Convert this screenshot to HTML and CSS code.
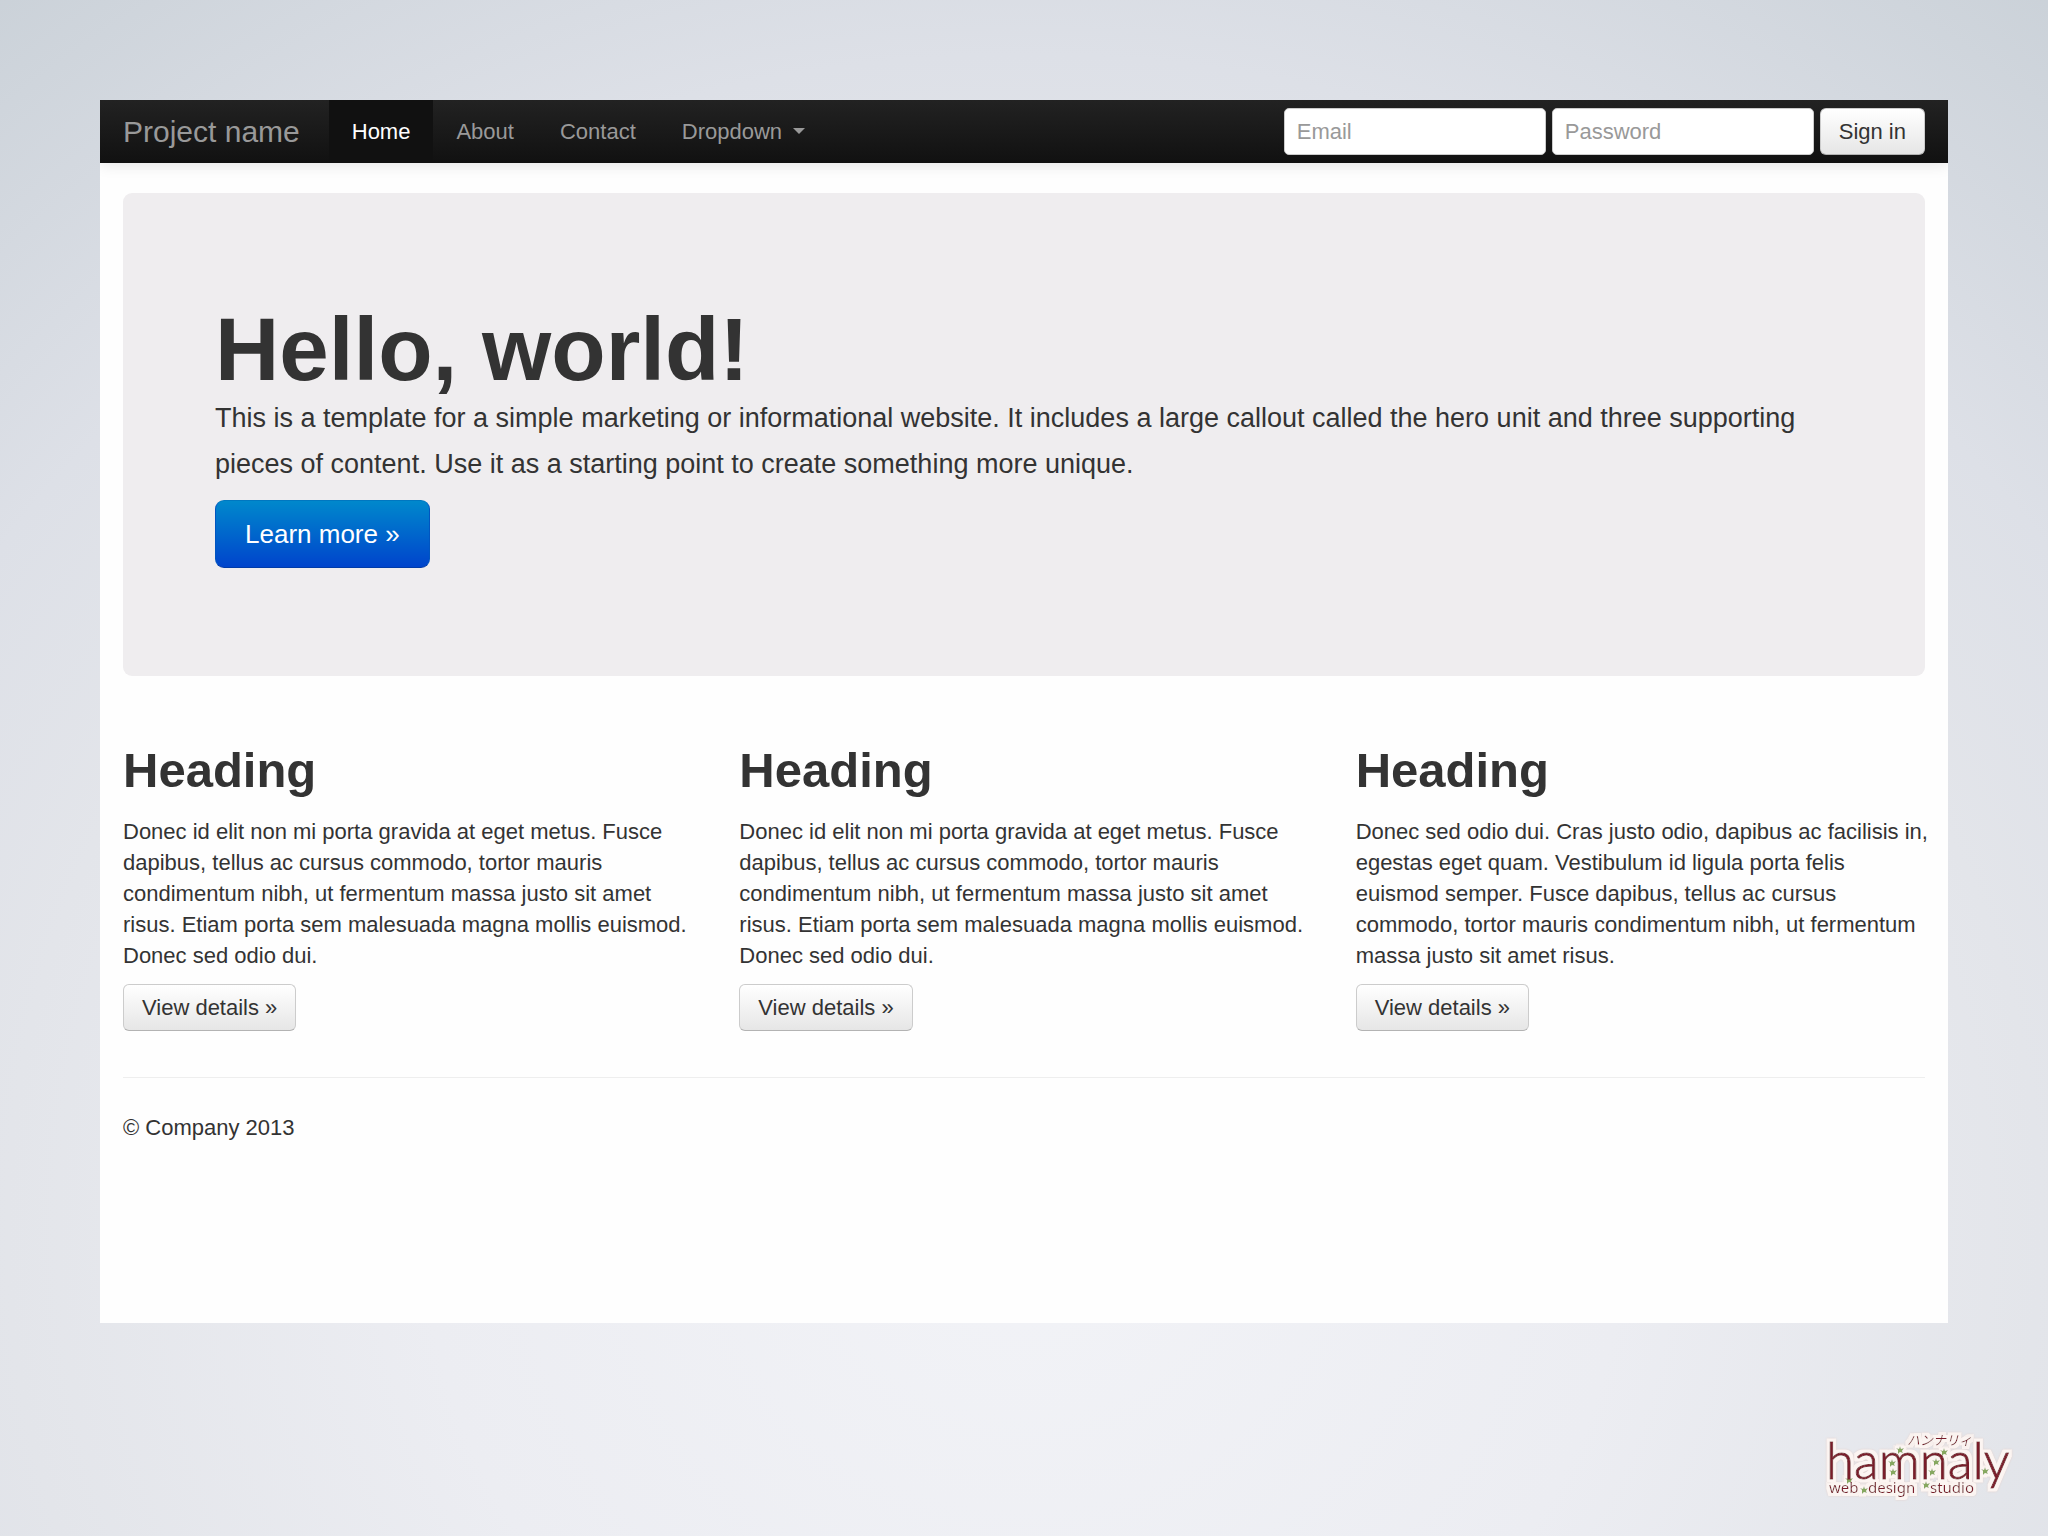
FILE: index.html
```
<!DOCTYPE html>
<html lang="en">
    <head>
        <meta charset="UTF-8" />
        <meta name="viewport" content="width=device-width, initial-scale=1.0" />
        <title>Project name</title>
        <link rel="stylesheet" href="styles.css">
    </head>
    <body>
        <div class="page">
            <header class="navbar">
                <a class="brand" href="#">Project name</a>
                <nav class="nav">
                    <a class="nav-link active" href="#">Home</a>
                    <a class="nav-link" href="#about">About</a>
                    <a class="nav-link" href="#contact">Contact</a>
                    <a class="nav-link" href="#">Dropdown <span class="caret"></span></a>
                </nav>
                <form class="signin">
                    <input class="field" type="text" placeholder="Email" aria-label="Email">
                    <input class="field" type="password" placeholder="Password" aria-label="Password">
                    <button class="btn" type="submit">Sign in</button>
                </form>
            </header>

            <main class="container">
                <section class="hero">
                    <h1>Hello, world!</h1>
                    <p>This is a template for a simple marketing or informational website. It includes a large callout called the hero unit and three supporting pieces of content. Use it as a starting point to create something more unique.</p>
                    <a class="btn btn-primary" href="#">Learn more »</a>
                </section>

                <div class="row">
                    <section class="col">
                        <h2>Heading</h2>
                        <p>Donec id elit non mi porta gravida at eget metus. Fusce dapibus, tellus ac cursus commodo, tortor mauris condimentum nibh, ut fermentum massa justo sit amet risus. Etiam porta sem malesuada magna mollis euismod. Donec sed odio dui.</p>
                        <a class="btn" href="#">View details »</a>
                    </section>
                    <section class="col">
                        <h2>Heading</h2>
                        <p>Donec id elit non mi porta gravida at eget metus. Fusce dapibus, tellus ac cursus commodo, tortor mauris condimentum nibh, ut fermentum massa justo sit amet risus. Etiam porta sem malesuada magna mollis euismod. Donec sed odio dui.</p>
                        <a class="btn" href="#">View details »</a>
                    </section>
                    <section class="col">
                        <h2>Heading</h2>
                        <p>Donec sed odio dui. Cras justo odio, dapibus ac facilisis in, egestas eget quam. Vestibulum id ligula porta felis euismod semper. Fusce dapibus, tellus ac cursus commodo, tortor mauris condimentum nibh, ut fermentum massa justo sit amet risus.</p>
                        <a class="btn" href="#">View details »</a>
                    </section>
                </div>

                <footer class="footer">© Company 2013</footer>
            </main>
        </div>

        <a class="logo" href="#">
            <svg width="200" height="80" viewBox="0 0 200 80">
                <defs>
                    <path id="leaf" d="M0 -4 L1 -1 L4 -2 L2 1 L3 3 L0 2 L-2 4 L-2 0 L-4 -2 L-1 -1 Z" />
                    <!-- pale outline round the lettering -->
                    <filter id="halo" x="-5%" y="-10%" width="110%" height="120%">
                        <feMorphology in="SourceAlpha" operator="dilate" radius="3" result="fat" />
                        <feGaussianBlur in="fat" stdDeviation="0.6" result="soft" />
                        <feFlood flood-color="#fcf5f2" />
                        <feComposite in2="soft" operator="in" result="outline" />
                        <feMerge>
                            <feMergeNode in="outline" />
                            <feMergeNode in="SourceGraphic" />
                        </feMerge>
                    </filter>
                </defs>
                <g class="logo-art">
                    <!-- ivy -->
                    <g class="logo-ivy">
                        <use href="#leaf" x="80" y="25" />
                        <use href="#leaf" x="124" y="27" />
                        <use href="#leaf" x="72" y="38" />
                        <use href="#leaf" x="73" y="47" />
                        <use href="#leaf" x="116" y="37" />
                        <use href="#leaf" x="112" y="47" />
                        <use href="#leaf" x="106" y="60" />
                        <use href="#leaf" x="165" y="46" />
                        <use href="#leaf" x="44" y="65" />
                        <use href="#leaf" x="29" y="55" />
                    </g>
                    <text class="logo-name" x="6" y="54">hamnaly</text>
                    <text class="logo-kana" x="87" y="20">ハンナリィ</text>
                    <text class="logo-sub" x="9" y="68">web</text>
                    <text class="logo-sub" x="48" y="68">design</text>
                    <text class="logo-sub" x="110" y="68">studio</text>
                </g>
            </svg>
        </a>
    </body>
</html>
```

FILE: styles.css
```
* {
    box-sizing: border-box;
}
body {
    display: flex;
    flex-direction: column;
    min-height: 100vh;
    margin: 0;
    padding: 100px 0 31px;
    font-family: "Liberation Sans", Arial, sans-serif;
    font-size: 22px;
    line-height: 31px;
    color: #333;
    background: radial-gradient(73% 91% at 50% 80%, #f2f3f7 0%, #ecedf2 40%, #e3e5ea 68%, #dde0e7 84%, #cad1d8 113%);
}
h1,
h2,
p {
    margin: 0;
}
a {
    color: inherit;
    text-decoration: none;
}
.page {
    overflow: hidden;
    margin: 0 100px;
    padding-bottom: 180px;
    background: #fefefe;
}

/* navbar */
.navbar {
    display: flex;
    align-items: center;
    height: 63px;
    padding: 0 23px;
    color: #999;
    background: linear-gradient(#222, #111);
    box-shadow: 0 2px 14px rgba(0, 0, 0, 0.1);
}
.brand {
    margin-right: 29px;
    font-size: 30px;
}
.nav {
    display: flex;
    align-self: stretch;
}
.nav-link {
    display: flex;
    align-items: center;
    padding: 0 23px;
}
.nav-link.active {
    color: #fff;
    background: #111;
}
.caret {
    margin: 0 0 2px 11px;
    border: 6px solid transparent;
    border-top-color: #999;
    border-bottom: 0;
}
.signin {
    display: flex;
    gap: 6px;
    margin-left: auto;
}
.field {
    width: 262px;
    height: 47px;
    padding: 0 12px;
    border: 1px solid #ccc;
    border-radius: 5px;
    font: inherit;
    color: #555;
    background: #fff;
}
.field::placeholder {
    color: #999;
}

/* buttons */
.btn {
    display: inline-block;
    padding: 7px 18px;
    border: 1px solid #ccc;
    border-bottom-color: #b3b3b3;
    border-radius: 6px;
    font: inherit;
    color: #333;
    background: linear-gradient(#fff, #e6e6e6);
}
.btn-primary {
    padding: 17px 29px;
    border-color: #0077c0 #0055c0 #003ba8;
    border-radius: 9px;
    font-size: 26px;
    line-height: 32px;
    color: #fff;
    background: linear-gradient(#0088cc, #0044cc);
}

/* content */
.container {
    padding: 30px 23px 0;
}
.hero {
    padding: 110px 92px 108px;
    border-radius: 9px;
    background: #efedef;
}
.hero h1 {
    font-size: 89px;
    line-height: 92px;
}
.hero p {
    margin-bottom: 13px;
    font-size: 27px;
    line-height: 46px;
}
.row {
    display: flex;
    gap: 47px;
    margin-top: 47px;
}
.col {
    flex: 1;
}
.col h2 {
    margin: 16px 0 15px;
    font-size: 49px;
    line-height: 62px;
}
.col p {
    margin: 0 -6px 13px 0;
}
.footer {
    margin-top: 46px;
    padding-top: 34px;
    border-top: 1px solid #eee;
}

/* studio logo */
.logo {
    height: 80px;
    margin: auto 28px 0 auto;
}
.logo-art {
    fill: #7a1c2a;
    filter: url(#halo) drop-shadow(0 0 1px #c4a49c);
}
.logo-name {
    font-family: Lato, sans-serif;
    font-size: 51px;
    font-weight: 300;
    stroke: #7a1c2a;
    stroke-width: 1px;
}
.logo-kana {
    font-family: "Noto Sans CJK JP", sans-serif;
    font-size: 13px;
    font-style: italic;
}
.logo-sub {
    font-family: "Noto Sans", sans-serif;
    font-size: 15px;
}
.logo-ivy {
    fill: #86a860;
}
```
